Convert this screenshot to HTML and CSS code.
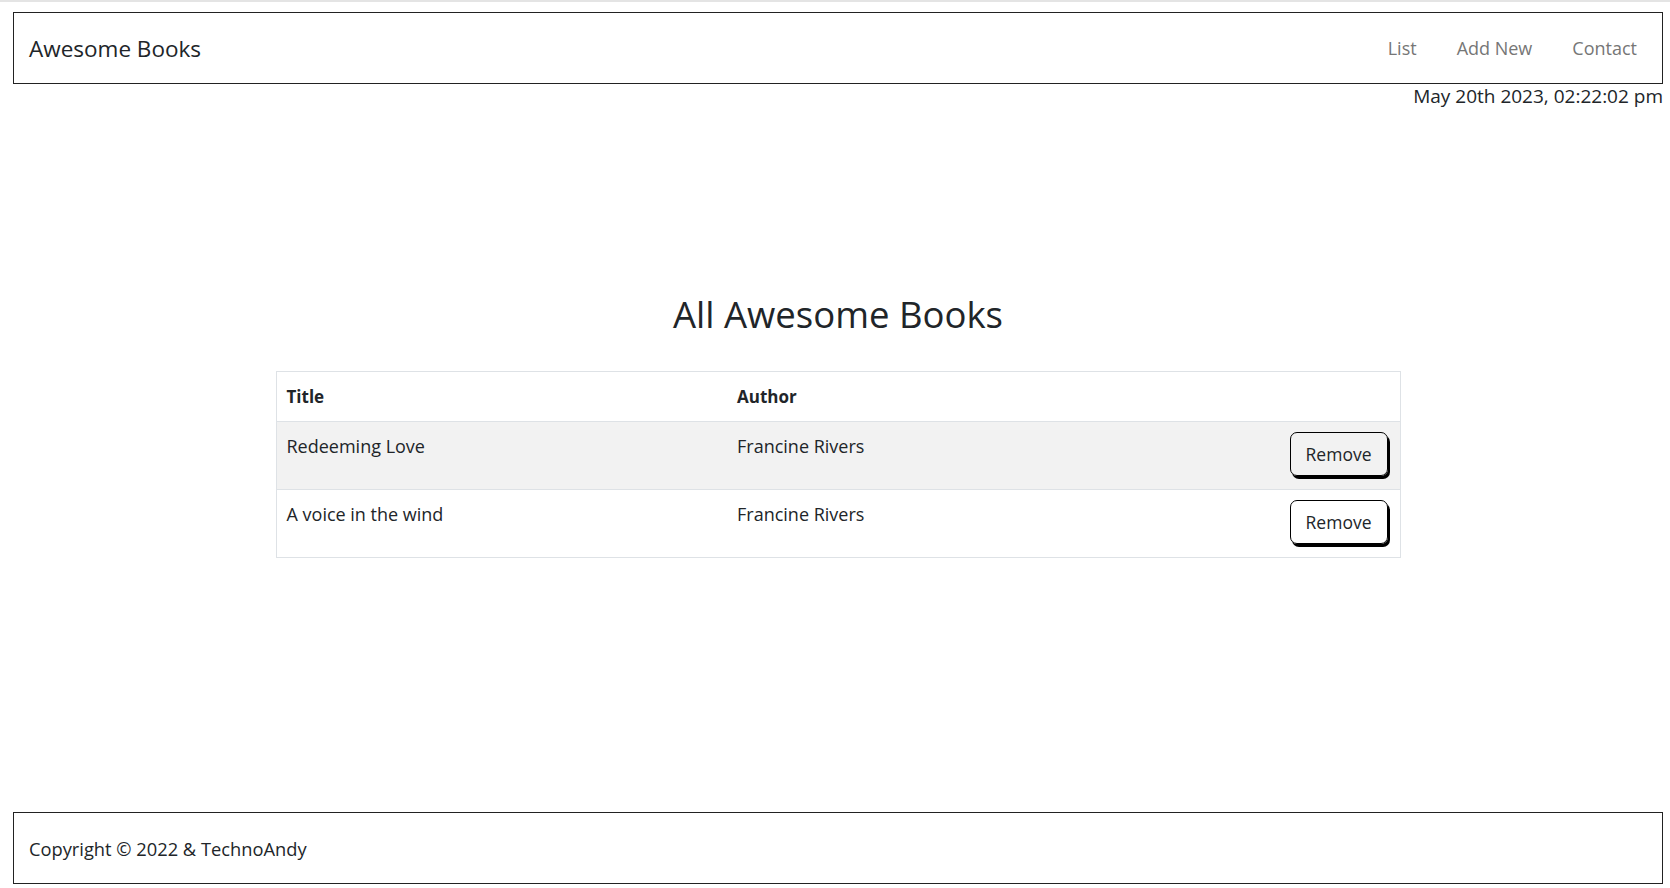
FILE: index.html
```html
<!DOCTYPE html>
<html lang="en">
<head>
<meta charset="utf-8">
<title>Awesome Books</title>
<link rel="stylesheet" href="styles.css">
</head>
<body>
<div class="page">
  <header class="navbar">
    <a class="brand" href="#">Awesome Books</a>
    <nav class="nav">
      <a class="nav-link" href="#">List</a>
      <a class="nav-link" href="#">Add New</a>
      <a class="nav-link" href="#">Contact</a>
    </nav>
  </header>
  <div class="date">May 20th 2023, 02:22:02 pm</div>
  <main class="main">
    <h1 class="title">All Awesome Books</h1>
    <table class="books">
      <thead>
        <tr>
          <th class="col-title">Title</th>
          <th class="col-author">Author</th>
          <th class="col-action"></th>
        </tr>
      </thead>
      <tbody>
        <tr class="striped">
          <td>Redeeming Love</td>
          <td>Francine Rivers</td>
          <td class="action"><button class="remove" type="button">Remove</button></td>
        </tr>
        <tr>
          <td>A voice in the wind</td>
          <td>Francine Rivers</td>
          <td class="action"><button class="remove" type="button">Remove</button></td>
        </tr>
      </tbody>
    </table>
  </main>
  <footer class="footer">Copyright © 2022 &amp; TechnoAndy</footer>
</div>
</body>
</html>
```
FILE: styles.css
```css
* { box-sizing: border-box; }

html, body {
  margin: 0;
  padding: 0;
}

body {
  border-top: 2px solid #e4e4e4;
  font-family: "Open Sans", "Noto Sans", sans-serif;
  color: #212529;
  background: #fff;
}

.page {
  display: flex;
  flex-direction: column;
  height: 886px;
  padding: 10px 7px 4px 13px;
}

.navbar {
  height: 72px;
  border: 1px solid #222;
  display: flex;
  align-items: center;
  justify-content: space-between;
  padding: 0 25px 0 15px;
}

.brand {
  font-size: 22.5px;
  color: #212529;
  text-decoration: none;
}

.nav {
  display: flex;
  gap: 40px;
}

.nav-link {
  font-size: 18px;
  color: #767676;
  text-decoration: none;
}

.date {
  text-align: right;
  font-size: 19px;
  line-height: 24px;
}

.main {
  flex: 1;
  padding: 184px 0 0 0;
  display: flex;
  flex-direction: column;
  align-items: center;
}

.title {
  margin: 0 0 34px;
  font-size: 36.5px;
  font-weight: 400;
  line-height: 45px;
}

.books {
  width: 1125px;
  border-collapse: collapse;
  border: 1px solid #dee2e6;
  font-size: 18px;
}

.books th {
  text-align: left;
  font-size: 17px;
  font-weight: 700;
  line-height: 29px;
  padding: 10px 10px 10px;
  border-bottom: 1px solid #dee2e6;
}

.col-title { width: 451px; }
.col-action { width: 130px; }

.books td {
  vertical-align: top;
  padding: 11px 10px 10px;
  line-height: 27px;
  border-bottom: 1px solid #dee2e6;
}

.books td.action {
  text-align: right;
  padding: 10px 12px 13px 10px;
}

.striped {
  background: #f2f2f2;
}

.remove {
  display: inline-block;
  vertical-align: top;
  height: 44px;
  padding: 0 15px;
  font-family: "Open Sans", "Noto Sans", sans-serif;
  font-size: 17.5px;
  color: #212529;
  background: transparent;
  border: 1px solid #000;
  border-radius: 7px;
  box-shadow: 2px 3px 0 #000;
  cursor: pointer;
}

.footer {
  height: 72px;
  border: 1px solid #222;
  display: flex;
  align-items: center;
  padding: 0 15px;
  font-size: 18.3px;
}
```
